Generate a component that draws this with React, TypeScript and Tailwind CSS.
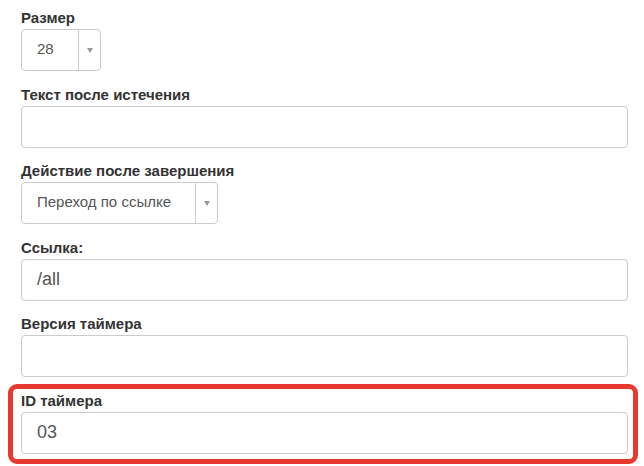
import React from 'react';

const FONT = { fontFamily: '"Liberation Sans", Arial, Helvetica, sans-serif' };

function Label({ children }: { children: React.ReactNode }) {
  return <label className="block text-[15px] font-bold leading-[20px] mb-px text-[#333]">{children}</label>;
}

function TextInput({ value }: { value?: string }) {
  return (
    <div className="h-[42px] w-[607px] border border-[#ccc] rounded-[4px] bg-white flex items-center pl-[15px] text-[18px] text-[#555]">
      {value}
    </div>
  );
}

function Select({ value, width, textW }: { value: string; width: number; textW: string }) {
  return (
    <div
      className="h-[42px] border border-[#ccc] rounded-[4px] bg-white flex items-stretch text-[15px] text-[#555]"
      style={{ width }}
    >
      <div className={`${textW} flex items-center pl-[15px] pb-[2px] border-r border-[#ccc]`}>{value}</div>
      <div className="flex-1 flex items-center justify-center">
        <span className="block w-0 h-0 border-l-[3.5px] border-r-[3.5px] border-t-[5px] border-l-transparent border-r-transparent border-t-[#999]" />
      </div>
    </div>
  );
}

export default function App() {
  return (
    <div className="w-[644px] h-[466px] bg-white overflow-hidden px-[21px] pt-[8px]" style={FONT}>
      <div className="flex flex-col gap-[13.5px]">
        <div>
          <Label>Размер</Label>
          <Select value="28" width={80} textW="w-[57px]" />
        </div>
        <div>
          <Label>Текст после истечения</Label>
          <TextInput />
        </div>
        <div>
          <Label>Действие после завершения</Label>
          <Select value="Переход по ссылке" width={197} textW="w-[174px]" />
        </div>
        <div>
          <Label>Ссылка:</Label>
          <TextInput value="/all" />
        </div>
        <div>
          <Label>Версия таймера</Label>
          <TextInput />
        </div>
        <div className="-mt-[7px] -ml-[13px] w-[630px] border-[5px] border-[#e8392f] rounded-[9px] pl-[8px] pt-[2px] pb-[5px]">
          <Label>ID таймера</Label>
          <TextInput value="03" />
        </div>
      </div>
    </div>
  );
}
